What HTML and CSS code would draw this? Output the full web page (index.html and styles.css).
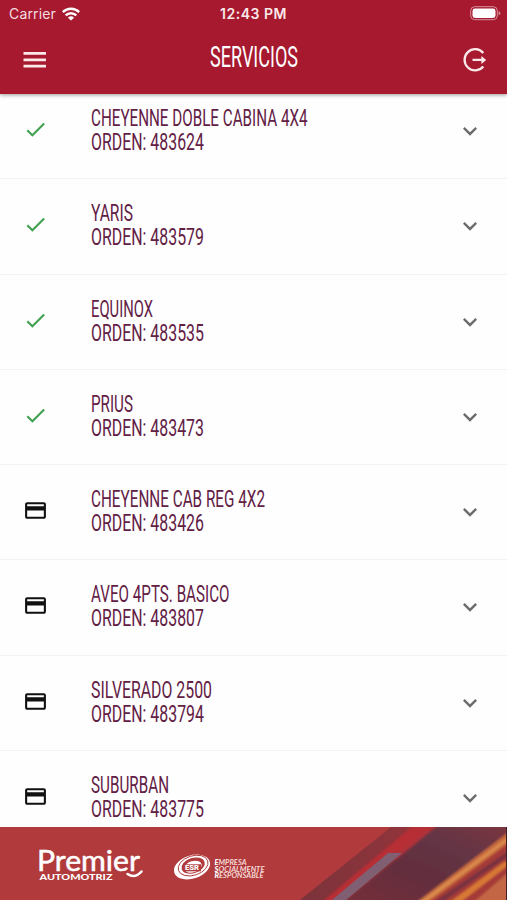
FILE: index.html
```
<!DOCTYPE html>
<html lang="es">
<head>
  <meta charset="utf-8">
  <title>Servicios</title>
  <link rel="stylesheet" href="styles.css">
</head>
<body>
  <svg class="defs" width="0" height="0">
    <symbol id="check" viewBox="0 0 24 24"><path d="M9 16.17L4.83 12l-1.42 1.41L9 19 21 7l-1.41-1.41z"/></symbol>
    <symbol id="card" viewBox="0 0 24 24"><path d="M20 4H4c-1.11 0-1.99.89-1.99 2L2 18c0 1.11.89 2 2 2h16c1.11 0 2-.89 2-2V6c0-1.11-.89-2-2-2zm0 14H4v-6h16v6zm0-10H4V6h16v2z"/></symbol>
    <symbol id="chevron" viewBox="0 0 24 24"><path d="M16.59 8.59L12 13.17 7.41 8.59 6 10l6 6 6-6z"/></symbol>
  </svg>

  <header class="header">
    <div class="status-bar">
      <div class="carrier">
        <span>Carrier</span>
        <svg width="18" height="14" viewBox="0 0 18 14" fill="none" stroke="#fff" stroke-width="2.5">
          <path d="M.8 5.1a11.8 11.8 0 0 1 16.4 0M3.7 8.3a7.6 7.6 0 0 1 10.6 0"/>
          <path d="M9 13.6L5.9 10.7a4.5 4.5 0 0 1 6.2 0z" fill="#fff" stroke="none"/>
        </svg>
      </div>
      <span class="clock">12:43 PM</span>
      <div class="battery">
        <svg width="31" height="15" viewBox="0 0 31 15">
          <rect x=".7" y=".7" width="26.6" height="13" rx="4" fill="none" stroke="#d6929c"/>
          <rect x="2.5" y="2.5" width="23" height="9.4" rx="2.4" fill="#fff"/>
          <path d="M28.6 5v4.4q1.7-.7 1.7-2.2T28.6 5z" fill="#d6929c"/>
        </svg>
      </div>
    </div>
    <div class="toolbar">
      <svg width="24" height="16" viewBox="0 0 24 16" fill="#fbe9ea"><path d="M.5 0h22.5v2.8H.5zM.5 6.4h22.5v2.8H.5zM.5 12.7h22.5v2.8H.5z"/></svg>
      <svg class="title" width="90" height="30"><text x="0" y="25" textLength="88" lengthAdjust="spacingAndGlyphs">SERVICIOS</text></svg>
      <svg width="24" height="24" viewBox="0 0 24 24" fill="none" stroke="#fbe9ea" stroke-width="2.3">
        <path d="M20.3 5A10.6 10.6 0 1 0 20.3 18.6M9.5 11.9H19"/>
        <path d="M18.4 7.9l4.8 4-4.8 4z" fill="#fbe9ea" stroke="none"/>
      </svg>
    </div>
  </header>

  <main class="list">
    <div class="row">
      <svg class="icon done"><use href="#check"/></svg>
      <svg class="label"><text y="41.8" textLength="216.5" lengthAdjust="spacingAndGlyphs">CHEYENNE DOBLE CABINA 4X4</text><text y="66" textLength="113" lengthAdjust="spacingAndGlyphs">ORDEN: 483624</text></svg>
      <svg class="arrow"><use href="#chevron"/></svg>
    </div>
    <div class="row">
      <svg class="icon done"><use href="#check"/></svg>
      <svg class="label"><text y="41.8" textLength="42" lengthAdjust="spacingAndGlyphs">YARIS</text><text y="66" textLength="113" lengthAdjust="spacingAndGlyphs">ORDEN: 483579</text></svg>
      <svg class="arrow"><use href="#chevron"/></svg>
    </div>
    <div class="row">
      <svg class="icon done"><use href="#check"/></svg>
      <svg class="label"><text y="41.8" textLength="62" lengthAdjust="spacingAndGlyphs">EQUINOX</text><text y="66" textLength="113" lengthAdjust="spacingAndGlyphs">ORDEN: 483535</text></svg>
      <svg class="arrow"><use href="#chevron"/></svg>
    </div>
    <div class="row">
      <svg class="icon done"><use href="#check"/></svg>
      <svg class="label"><text y="41.8" textLength="42" lengthAdjust="spacingAndGlyphs">PRIUS</text><text y="66" textLength="113" lengthAdjust="spacingAndGlyphs">ORDEN: 483473</text></svg>
      <svg class="arrow"><use href="#chevron"/></svg>
    </div>
    <div class="row">
      <svg class="icon"><use href="#card"/></svg>
      <svg class="label"><text y="41.8" textLength="174" lengthAdjust="spacingAndGlyphs">CHEYENNE CAB REG 4X2</text><text y="66" textLength="113" lengthAdjust="spacingAndGlyphs">ORDEN: 483426</text></svg>
      <svg class="arrow"><use href="#chevron"/></svg>
    </div>
    <div class="row">
      <svg class="icon"><use href="#card"/></svg>
      <svg class="label"><text y="41.8" textLength="138.5" lengthAdjust="spacingAndGlyphs">AVEO 4PTS. BASICO</text><text y="66" textLength="113" lengthAdjust="spacingAndGlyphs">ORDEN: 483807</text></svg>
      <svg class="arrow"><use href="#chevron"/></svg>
    </div>
    <div class="row">
      <svg class="icon"><use href="#card"/></svg>
      <svg class="label"><text y="41.8" textLength="121" lengthAdjust="spacingAndGlyphs">SILVERADO 2500</text><text y="66" textLength="113" lengthAdjust="spacingAndGlyphs">ORDEN: 483794</text></svg>
      <svg class="arrow"><use href="#chevron"/></svg>
    </div>
    <div class="row">
      <svg class="icon"><use href="#card"/></svg>
      <svg class="label"><text y="41.8" textLength="78" lengthAdjust="spacingAndGlyphs">SUBURBAN</text><text y="66" textLength="113" lengthAdjust="spacingAndGlyphs">ORDEN: 483775</text></svg>
      <svg class="arrow"><use href="#chevron"/></svg>
    </div>
  </main>

  <footer class="banner">
    <svg width="507" height="73" viewBox="0 0 507 73">
      <defs>
        <linearGradient id="dusk" x1="0" y1="1" x2="1" y2="0">
          <stop offset="0" stop-color="#762f3a"/>
          <stop offset=".4" stop-color="#632d3d"/>
          <stop offset=".7" stop-color="#653645"/>
          <stop offset="1" stop-color="#7c3440"/>
        </linearGradient>
        <linearGradient id="shade" x1="0" y1="0" x2="1" y2="0">
          <stop offset="0" stop-color="#7b333b"/>
          <stop offset="1" stop-color="#a7353a"/>
        </linearGradient>
        <filter id="soft"><feGaussianBlur stdDeviation=".8"/></filter>
      </defs>
      <!-- light streaks -->
      <path d="M300 73L391 0H507V73z" fill="url(#shade)"/>
      <g filter="url(#soft)">
        <path d="M322 75L414 -2H432L338 75z" fill="#b82f36"/>
        <path d="M345 75L438 -2H510V75z" fill="url(#dusk)"/>
        <path d="M390 32L432 -2H438L396 32z" fill="#b03038"/>
        <path d="M418 75L510 8V75z" fill="#a53b38"/>
        <path d="M417 75L510 4V15L429 75z" fill="#c96b3e"/>
        <path d="M420 75L510 9V12L425 75z" fill="#dd9050"/>
        <path d="M434 75L510 23V28L442 75z" fill="#773340"/>
        <path d="M450 75L504 35H510V37L461 75z" fill="#d87835"/>
        <path d="M474 75L510 44V75z" fill="#c36644"/>
      </g>
      <path d="M332 73L388 26H402L346 73z" fill="#805f72"/>
      <path d="M506 0h1v73h-1z" fill="#431c26"/>

      <g fill="#fff">
        <text class="brand" x="37" y="43.5" textLength="103" lengthAdjust="spacingAndGlyphs">Premier</text>
        <path d="M127.500 47q7.500 5 14-2.500" fill="none" stroke="#fff" stroke-width="2.5" stroke-linecap="round"/>
        <text class="brand-sub" x="39.500" y="52.500" textLength="73" lengthAdjust="spacingAndGlyphs">AUTOMOTRIZ</text>
      </g>

      <g transform="rotate(-18 192 40)">
        <ellipse cx="192" cy="40" rx="18.6" ry="11.6" fill="#fff"/>
        <ellipse cx="193.5" cy="39" rx="15.4" ry="9.7" fill="none" stroke="#b03a3c" stroke-width=".9"/>
        <ellipse cx="193.5" cy="39" rx="12" ry="7.6" fill="#b03a3c"/>
        <ellipse cx="193" cy="40" rx="9" ry="5.6" fill="#fff"/>
      </g>
      <rect x="183" y="37.3" width="18" height="7" fill="#b03a3c"/>
      <text class="esr" x="185" y="43.4" textLength="14" lengthAdjust="spacingAndGlyphs">ESR</text>
      <g class="esr-name">
        <text x="214.5" y="38.4" textLength="32" lengthAdjust="spacingAndGlyphs"><tspan class="initial">E</tspan>MPRESA</text>
        <text x="214.5" y="44.7" textLength="50" lengthAdjust="spacingAndGlyphs"><tspan class="initial">S</tspan>OCIALMENTE</text>
        <text x="214.5" y="51" textLength="49" lengthAdjust="spacingAndGlyphs"><tspan class="initial">R</tspan>ESPONSABLE</text>
      </g>
    </svg>
  </footer>
</body>
</html>
```
FILE: styles.css
```
body {
  margin: 0;
  height: 900px;
  display: flex;
  flex-direction: column;
  overflow: hidden;
  background-color: #fefefe;
  font-family: Roboto, "Liberation Sans", sans-serif;
}

svg {
  display: block;
  flex-shrink: 0;
}

.defs {
  display: none;
}

.header {
  height: 94px;
  flex-shrink: 0;
  background-color: #a6192f;
  color: #fff;
  z-index: 1;
  box-shadow: 0 1px 4px rgba(0, 0, 0, .4);
}

.status-bar {
  display: grid;
  grid-template-columns: 1fr auto 1fr;
  align-items: center;
  height: 27px;
  padding: 0 6px 0 9px;
  font-family: Inter, sans-serif;
  font-size: 14px;
}

.carrier {
  display: flex;
  align-items: center;
  gap: 6px;
  color: #f6dde0;
  letter-spacing: .15px;
}

.clock {
  margin-right: 3px;
  font-size: 14px;
  font-weight: 600;
  letter-spacing: .5px;
  color: #fbe9ea;
}

.battery {
  display: flex;
  justify-content: flex-end;
}

.toolbar {
  display: flex;
  align-items: center;
  justify-content: space-between;
  height: 65px;
  padding: 0 20px 0 23px;
}

.title {
  margin-top: -5px;
  overflow: visible;
}

.title text {
  fill: #fff;
  font-size: 30px;
  font-weight: 400;
}

.list {
  flex: 1;
  min-height: 0;
  overflow: hidden;
}

.row {
  display: flex;
  height: 95.3px;
  box-sizing: border-box;
  padding: 0 23px 0 23px;
  border-bottom: 1px solid #f3f3f3;
}

.row:first-child {
  margin-top: -10px;
}

.icon {
  width: 25px;
  height: 25px;
  margin-top: 33px;
  fill: #111;
}

.done {
  fill: #43a052;
}

.label {
  width: 300px;
  height: 80px;
  margin-left: 43px;
}

.label text {
  fill: #622045;
  font-size: 24.6px;
}

.arrow {
  width: 28px;
  height: 28px;
  margin: 33px 0 0 auto;
  fill: #6c6c6c;
}

.banner {
  height: 73px;
  flex-shrink: 0;
  background-color: #b03a3c;
}

.brand {
  font-family: Lato, sans-serif;
  font-size: 28.5px;
  stroke: #fff;
  stroke-width: .5px;
}

.brand-sub {
  font-family: Lato, sans-serif;
  font-size: 7.6px;
  font-weight: 900;
}

.esr {
  fill: #fff;
  font-size: 7px;
  font-weight: 900;
}

.esr-name {
  fill: #f5d9d6;
  font-family: Lato, sans-serif;
  font-size: 6.6px;
  font-style: italic;
  font-weight: 700;
}

.initial {
  fill: #fff;
  font-weight: 900;
}
```
